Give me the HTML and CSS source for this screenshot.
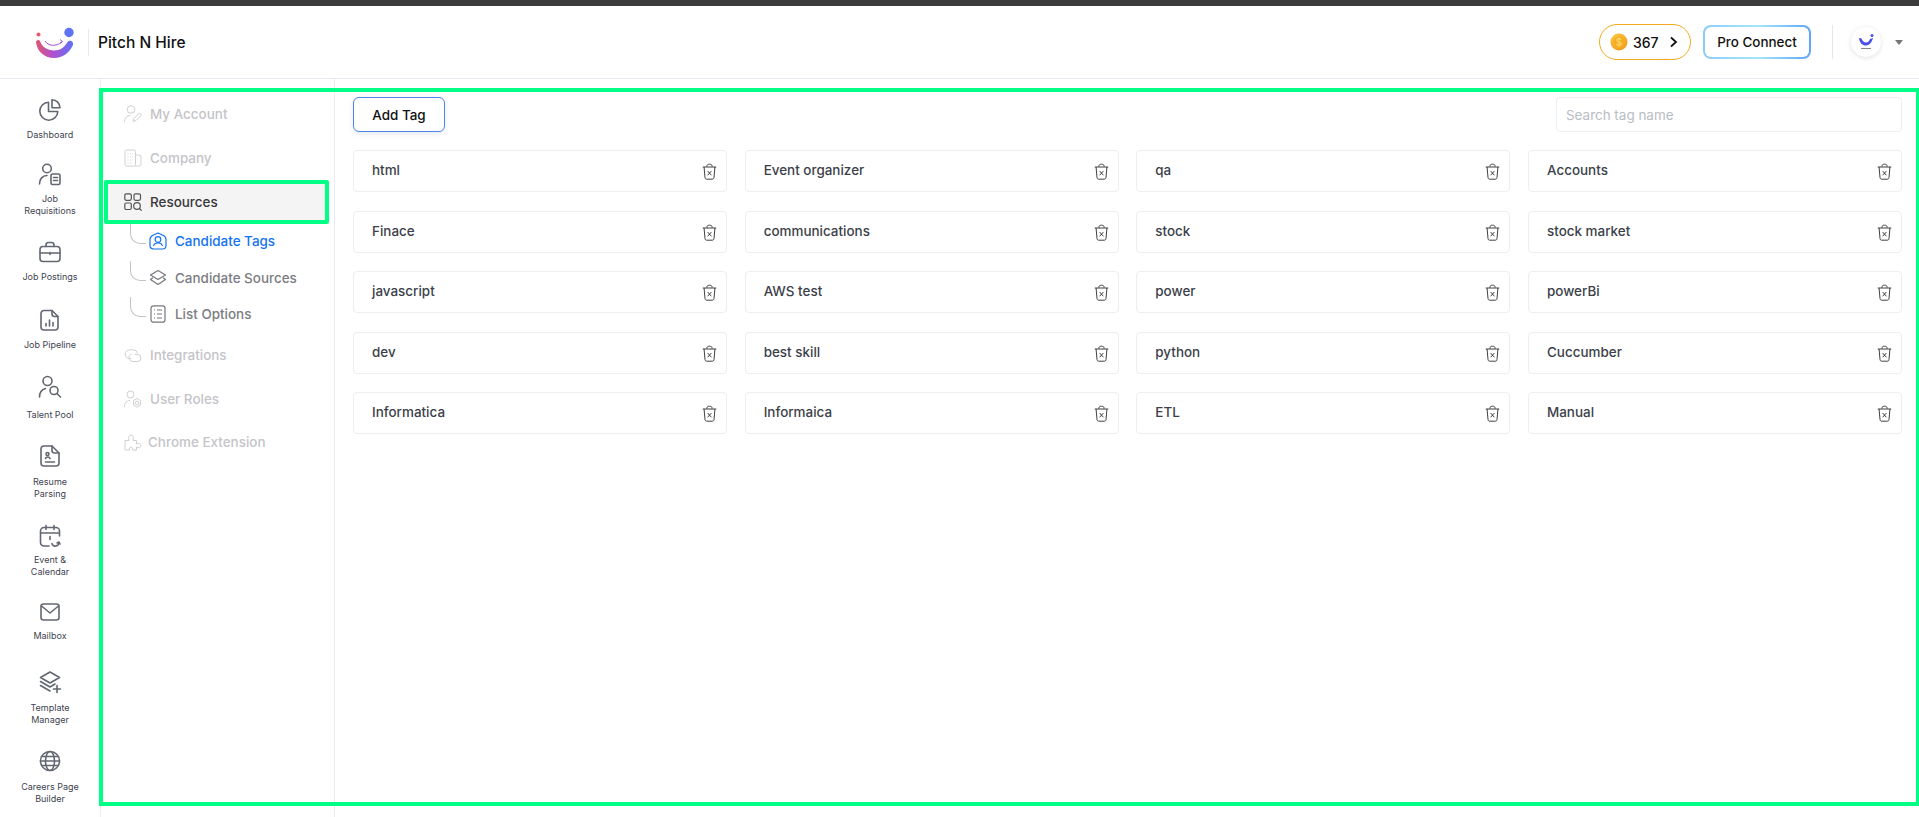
FILE: index.html
```html
<!DOCTYPE html>
<html lang="en">
<head>
<meta charset="utf-8">
<title>Pitch N Hire</title>
<link rel="stylesheet" href="styles.css">
</head>
<body>
<svg class="defs" width="0" height="0" aria-hidden="true">
  <defs>
    <linearGradient id="logoGrad" x1="0" y1="0" x2="1" y2="0">
      <stop offset="0" stop-color="#e0566f"/>
      <stop offset="0.45" stop-color="#b14fd0"/>
      <stop offset="1" stop-color="#5f73f5"/>
    </linearGradient>
    <radialGradient id="coinGrad" cx="0.4" cy="0.35" r="0.7">
      <stop offset="0" stop-color="#ffd34f"/>
      <stop offset="1" stop-color="#f19a12"/>
    </radialGradient>
    <symbol id="trash" viewBox="0 0 16 18">
      <path d="M.8 4.200h14.400M5.200 3.800C5.200 2 6 1.200 8 1.200s2.800.8 2.800 2.600M2.200 4.200l1 11.200c.1 1.200.8 1.800 1.900 1.800h5.800c1.100 0 1.800-.6 1.900-1.800l1-11.200M6 8.500l4 4.500M10 8.500l-4 4.500" fill="none" stroke="currentColor" stroke-width="1"/>
    </symbol>
  </defs>
</svg>
<div class="topstrip"></div>
<header class="header">
  <div class="brand">
    <svg class="logo" width="42" height="34" viewBox="0 -2 42 34">
      <circle cx="3.500" cy="7.500" r="2" fill="#e8596e"/>
      <circle cx="34" cy="5.500" r="4.700" fill="#5f73f5"/>
      <path d="M1 15c1 10 9 16 18 16s16-6 19-13c1-3-3-6-5.500-3-3 5-7 8.500-13.500 8.500S7 20 5 14c-1-2-4-1-4 1z" fill="url(#logoGrad)"/>
      <path d="M10 14c3 5 11 6 17 1" fill="none" stroke="#a44fd4" stroke-width="1"/>
      <path d="M25 12.500l2.500 2-2.500 1.500" fill="none" stroke="#a44fd4" stroke-width="1"/>
    </svg>
    <span class="brand-sep"></span>
    <span class="brand-name">Pitch N Hire</span>
  </div>
  <div class="header-actions">
    <button class="coins" type="button">
      <svg width="18" height="18" viewBox="0 0 18 18"><circle cx="9" cy="9" r="8.500" fill="url(#coinGrad)"/><circle cx="9" cy="9" r="5.800" fill="#f5ab22"/><text x="9" y="12.500" text-anchor="middle" class="coin-s">$</text></svg>
      <span>367</span>
      <svg class="chev" width="9" height="12" viewBox="0 0 9 12"><path d="M2 1.500L7 6l-5 4.500" fill="none" stroke="#111" stroke-width="1.800"/></svg>
    </button>
    <button class="pro" type="button">Pro Connect</button>
    <span class="head-sep"></span>
    <span class="avatar">
      <svg width="18" height="18" viewBox="0 0 18 18"><path d="M2 5c.5 5 3.500 7.500 7 7.500S15 9 16 5l-3 1c-1 2.500-2 3.500-4 3.500S5.500 8 4.500 5.500z" fill="#4a50e8"/><circle cx="15" cy="2.500" r="1.500" fill="#4a50e8"/><rect x="4" y="15" width="10" height="1" fill="#888"/></svg>
    </span>
    <span class="caret"></span>
  </div>
</header>
<div class="workspace">
  <nav class="rail">
    <a class="rail-item low">
      <svg width="24" height="24" viewBox="0 0 24 24" class="ri"><path d="M10.500 4.200a9 9 0 1 0 9.300 9.300H10.500z"/><path d="M14 1.800a8 8 0 0 1 8 8h-8z"/></svg>
      <span>Dashboard</span>
    </a>
    <a class="rail-item">
      <svg width="24" height="24" viewBox="0 0 24 24" class="ri"><circle cx="9" cy="5.500" r="4.300"/><path d="M1.500 21c0-5 3-8.500 7.500-8.500"/><rect x="13" y="11" width="9" height="10.500" rx="1.500"/><path d="M15.500 14.500h4M15.500 17.500h4"/></svg>
      <span>Job<br>Requisitions</span>
    </a>
    <a class="rail-item low">
      <svg width="24" height="24" viewBox="0 0 24 24" class="ri"><rect x="2" y="6.500" width="20" height="15" rx="3"/><path d="M8 6.500V5a2.500 2.500 0 0 1 2.500-2.500h3A2.500 2.500 0 0 1 16 5v1.500M2 13h20M12 12.500v2"/></svg>
      <span>Job Postings</span>
    </a>
    <a class="rail-item low">
      <svg width="24" height="24" viewBox="0 0 24 24" class="ri"><path d="M6 2.500h8l6 6V19a3 3 0 0 1-3 3H6a3 3 0 0 1-3-3V5.500a3 3 0 0 1 3-3z"/><path d="M14 2.500V6a2.500 2.500 0 0 0 2.500 2.500H20M8 18v-2.500M11.500 18v-6M15 18v-3.500"/></svg>
      <span>Job Pipeline</span>
    </a>
    <a class="rail-item lowest">
      <svg width="24" height="24" viewBox="0 0 24 24" class="ri"><circle cx="9.500" cy="6" r="4.500"/><path d="M1.500 22c0-4.500 2.500-7.500 6-8.500"/><circle cx="16" cy="15.500" r="4"/><path d="M19 18.500l3.500 3.500"/></svg>
      <span>Talent Pool</span>
    </a>
    <a class="rail-item lower">
      <svg width="24" height="24" viewBox="0 0 24 24" class="ri"><path d="M6 2h8l7 7v10a3 3 0 0 1-3 3H6a3 3 0 0 1-3-3V5a3 3 0 0 1 3-3z"/><path d="M14 2v4.500A2.500 2.500 0 0 0 16.500 9H21M7.500 14.500c.5-2 4-2 4.500 0M7.500 18h9"/><circle cx="9.500" cy="10" r="1.500"/></svg>
      <span>Resume<br>Parsing</span>
    </a>
    <a class="rail-item">
      <svg width="24" height="24" viewBox="0 0 24 24" class="ri"><path d="M11 22H6a3.500 3.500 0 0 1-3.500-3.500V7A3.500 3.500 0 0 1 6 3.500h12A3.500 3.500 0 0 1 21.500 7v5M2.500 9h19M8 1.500v4M16 1.500v4M12 12.500v3"/><path d="M14 19.500c0 1.500 2 3 4 2.500s3-2 3-3.500"/><path d="M19 19l2-1 1 2"/></svg>
      <span>Event &amp;<br>Calendar</span>
    </a>
    <a class="rail-item">
      <svg width="24" height="24" viewBox="0 0 24 24" class="ri"><rect x="3" y="4" width="18" height="16" rx="2.500"/><path d="M3.500 6l8.500 7 8.500-7"/></svg>
      <span>Mailbox</span>
    </a>
    <a class="rail-item lower">
      <svg width="24" height="24" viewBox="0 0 24 24" class="ri"><path d="M12 2l9.500 5.500L12 13 2.500 7.500z"/><path d="M2.500 11.500L12 17l5-3M2.500 15.500L12 21"/><path d="M19 15.500v7M15.500 19h7"/></svg>
      <span>Template<br>Manager</span>
    </a>
    <a class="rail-item lower">
      <svg width="24" height="24" viewBox="0 0 24 24" class="ri"><circle cx="12" cy="12" r="9.500"/><ellipse cx="12" cy="12" rx="4.500" ry="9.500"/><path d="M2.500 12h19M3.500 7.500h17M3.500 16.500h17"/></svg>
      <span>Careers Page<br>Builder</span>
    </a>
  </nav>
  <aside class="subnav">
    <a class="sub-item muted">
      <svg width="18" height="18" viewBox="0 0 18 18" class="si"><circle cx="7" cy="4.500" r="3.800"/><path d="M.5 17c0-4 2.500-6.500 6-6.500M9 16.500l1-3 5.500-5.500 2 2-5.500 5.500z"/></svg>
      <span>My Account</span>
    </a>
    <a class="sub-item muted">
      <svg width="18" height="18" viewBox="0 0 18 18" class="si"><rect x="1" y="1" width="10.500" height="16" rx="1.500"/><path d="M11.500 6H15a2 2 0 0 1 2 2v7a2 2 0 0 1-2 2h-3.500M3.500 5h1M6 5h1M8.500 5h.5M3.500 8h1M6 8h1M8.500 8h.5M3.500 11h1M6 11h1M8.500 11h.5M3.500 14h1M6 14h1M8.500 14h.5"/></svg>
      <span>Company</span>
    </a>
    <a class="sub-item current">
      <svg width="18" height="18" viewBox="0 0 18 18" class="si"><rect x=".8" y=".8" width="6.500" height="6.500" rx="1.500"/><rect x="10" y=".8" width="6.500" height="6.500" rx="1.500"/><rect x=".8" y="10" width="6.500" height="6.500" rx="1.500"/><circle cx="13" cy="13" r="3.300"/><path d="M15.500 15.500l2.200 2.200"/></svg>
      <span>Resources</span>
    </a>
    <a class="child active">
      <span class="elbow first"></span>
      <svg width="18" height="18" viewBox="0 0 18 18" class="si"><path d="M9 1l5 2.200c2 .9 3 2.300 3 4.300v6c0 2-1.500 3.500-3.500 3.500h-9C2.500 17 1 15.500 1 13.500v-6c0-2 1-3.400 3-4.300z"/><circle cx="9" cy="7.500" r="2.800"/><path d="M4.500 14c.5-2.500 2.500-3 4.500-3s4 .5 4.500 3"/></svg>
      <span>Candidate Tags</span>
    </a>
    <a class="child">
      <span class="elbow"></span>
      <svg width="18" height="18" viewBox="0 0 18 18" class="si"><path d="M9 1.500l7.500 4.500L9 10.500 1.500 6z"/><path d="M4 8.700L1.500 10.500 9 15.500l7.500-5L14 8.700"/></svg>
      <span>Candidate Sources</span>
    </a>
    <a class="child">
      <span class="elbow"></span>
      <svg width="18" height="18" viewBox="0 0 18 18" class="si"><rect x="2" y=".8" width="14" height="16.400" rx="2.500"/><path d="M5 5h1M8 5h5M5 9h1M8 9h5M5 13h1M8 13h5"/></svg>
      <span>List Options</span>
    </a>
    <a class="sub-item muted after-tree">
      <svg width="18" height="18" viewBox="0 0 18 18" class="si"><path d="M7 12.500H5.500a4.300 4.300 0 0 1 0-8.600h4a4 4 0 0 1 4 3.500"/><path d="M7.500 8.500c-2 0-2.500 1.500-2.500 3s1.500 4 4 4h4.500a3.500 3.500 0 0 0 0-7H11"/></svg>
      <span>Integrations</span>
    </a>
    <a class="sub-item muted">
      <svg width="18" height="18" viewBox="0 0 18 18" class="si"><circle cx="6.500" cy="4.500" r="3.500"/><path d="M.5 17c0-4 2-6.500 5.500-6.500"/><circle cx="13" cy="13" r="1.800"/><path d="M13 8.500l3.500 2v4.500L13 17.200l-3.500-2.200v-4.500z"/></svg>
      <span>User Roles</span>
    </a>
    <a class="sub-item muted ext">
      <svg width="18" height="18" viewBox="0 0 18 18" class="si"><path d="M1 17V7.500h4C4 5 5 2 7 2s3 3 2 5.500h3.500V11c2-1 4.500-.5 4.500 1.500S14.500 15 12.500 14v3H8.500c.5-2-.5-3-1.500-3s-2 1-1.500 3z"/></svg>
      <span>Chrome Extension</span>
    </a>
  </aside>
  <main class="main">
    <div class="toolbar">
      <button class="add-tag" type="button">Add Tag</button>
      <input class="search" type="text" placeholder="Search tag name">
    </div>
    <div class="tags">
      <div class="tag"><span>html</span><svg class="trash"><use href="#trash"/></svg></div>
      <div class="tag"><span>Event organizer</span><svg class="trash"><use href="#trash"/></svg></div>
      <div class="tag"><span>qa</span><svg class="trash"><use href="#trash"/></svg></div>
      <div class="tag"><span>Accounts</span><svg class="trash"><use href="#trash"/></svg></div>
      <div class="tag"><span>Finace</span><svg class="trash"><use href="#trash"/></svg></div>
      <div class="tag"><span>communications</span><svg class="trash"><use href="#trash"/></svg></div>
      <div class="tag"><span>stock</span><svg class="trash"><use href="#trash"/></svg></div>
      <div class="tag"><span>stock market</span><svg class="trash"><use href="#trash"/></svg></div>
      <div class="tag"><span>javascript</span><svg class="trash"><use href="#trash"/></svg></div>
      <div class="tag"><span>AWS test</span><svg class="trash"><use href="#trash"/></svg></div>
      <div class="tag"><span>power</span><svg class="trash"><use href="#trash"/></svg></div>
      <div class="tag"><span>powerBi</span><svg class="trash"><use href="#trash"/></svg></div>
      <div class="tag"><span>dev</span><svg class="trash"><use href="#trash"/></svg></div>
      <div class="tag"><span>best skill</span><svg class="trash"><use href="#trash"/></svg></div>
      <div class="tag"><span>python</span><svg class="trash"><use href="#trash"/></svg></div>
      <div class="tag"><span>Cuccumber</span><svg class="trash"><use href="#trash"/></svg></div>
      <div class="tag"><span>Informatica</span><svg class="trash"><use href="#trash"/></svg></div>
      <div class="tag"><span>Informaica</span><svg class="trash"><use href="#trash"/></svg></div>
      <div class="tag"><span>ETL</span><svg class="trash"><use href="#trash"/></svg></div>
      <div class="tag"><span>Manual</span><svg class="trash"><use href="#trash"/></svg></div>
    </div>
  </main>
  <div class="panel-outline"></div>
</div>
</body>
</html>
```
FILE: styles.css
```css
* { box-sizing: border-box; }
html, body { height: 100%; }
body {
  margin: 0;
  display: flex;
  flex-direction: column;
  height: 817px;
  overflow: hidden;
  background: #fff;
  color: #222;
  font-family: Inter, "Liberation Sans", sans-serif;
}
.defs { position: absolute; }
.topstrip { height: 6px; flex: none; background: #3c3c3c; }

.header {
  flex: none;
  height: 73px;
  display: flex;
  align-items: center;
  justify-content: space-between;
  padding: 0 16px 0 35px;
  border-bottom: 1px solid #e9e9ef;
}
.brand { display: flex; align-items: center; }
.logo { display: block; }
.brand-sep { width: 1px; height: 27px; margin: 0 9px 0 11px; background: #e9e9ef; }
.brand-name { font-size: 15.500px; font-weight: 500; color: #111; }
.header-actions { display: flex; align-items: center; }
.coins {
  display: flex;
  align-items: center;
  width: 92px;
  height: 36px;
  padding: 0 0 0 10px;
  border: 1px solid #f4a81f;
  border-radius: 18px;
  background: #fff;
  font: 500 14px Inter, sans-serif;
  color: #111;
}
.coins span { margin-left: 5px; }
.chev { margin-left: 10px; }
.coin-s { font: 600 10px Inter, sans-serif; fill: #fbd466; }
.pro {
  width: 108px;
  height: 34px;
  margin-left: 12px;
  padding: 0;
  border: 2px solid transparent;
  border-radius: 8px;
  background: linear-gradient(#fff, #fff) padding-box, linear-gradient(90deg, #8ccbfa, #a5e6fc 50%, #5fa5f9) border-box;
  font: 500 13.440px Inter, sans-serif;
  color: #111;
}
.head-sep { width: 1px; height: 34px; margin: 0 18px 0 21px; background: #e6e6ec; }
.avatar {
  width: 30px;
  height: 30px;
  display: flex;
  align-items: center;
  justify-content: center;
  border-radius: 50%;
  background: #fff;
  box-shadow: 0 1px 5px rgba(0, 0, 0, .12);
}
.caret {
  width: 0;
  height: 0;
  margin-left: 14px;
  border: 4px solid transparent;
  border-top: 5px solid #777;
  border-bottom: 0;
}

.workspace { position: relative; flex: 1; display: flex; min-height: 0; }
.rail {
  flex: none;
  width: 101px;
  padding-top: 19px;
  border-right: 1px solid #ececf2;
  display: grid;
  grid-template-rows: 65px 77px 68px 67px 69px 80px 76px 70px 79px 60px;
}
.rail-item {
  display: flex;
  flex-direction: column;
  align-items: center;
  color: #3e4350;
  font-size: 9px;
  line-height: 11.500px;
  text-align: center;
}
.rail-item span { margin-top: 6px; }
.rail-item.low span { margin-top: 7px; }
.rail-item.lower span { margin-top: 8px; }
.rail-item.lowest span { margin-top: 9.500px; }
.ri { fill: none; stroke: #636771; stroke-width: 1.600; stroke-linejoin: round; stroke-linecap: round; }

.subnav {
  flex: none;
  width: 234px;
  padding-top: 13px;
  border-right: 1px solid #ececf2;
}
.sub-item {
  display: flex;
  align-items: center;
  height: 44px;
  padding-left: 23px;
  font-size: 13.440px;
  font-weight: 500;
  gap: 8px;
}
.sub-item.muted { color: #c4c4c9; }
.sub-item.after-tree { margin-top: 1px; }
.sub-item.ext { gap: 6px; margin-top: -1px; }
.sub-item.muted .si { stroke: #d0d0d4; stroke-width: 1; }
.si { fill: none; stroke: #555; stroke-width: 1.200; stroke-linejoin: round; flex: none; }
.sub-item.current {
  margin: 0 5px -1px 3px;
  padding: 0 0 0 16px;
  background: #f4f4f4;
  border: 4px solid #00ff85;
  border-radius: 2px;
  color: #37373b;
}
.child {
  position: relative;
  display: flex;
  align-items: center;
  height: 36.400px;
  padding-left: 48px;
  gap: 8px;
  font-size: 13.440px;
  font-weight: 500;
  color: #7c7c82;
}
.child .si { stroke: #77777d; }
.child.active { color: #1473f0; }
.child.active .si { stroke: #1473f0; }
.elbow {
  position: absolute;
  left: 29px;
  bottom: 15px;
  width: 16px;
  height: 20px;
  border-left: 1px solid #c4c4c8;
  border-bottom: 1px solid #c4c4c8;
  border-bottom-left-radius: 10px;
}

.main { flex: 1; min-width: 0; padding: 18px 17px 0 18px; }
.toolbar { display: flex; align-items: flex-start; justify-content: space-between; }
.add-tag {
  width: 92px;
  height: 35px;
  padding: 0;
  border: 1px solid #4d86ea;
  border-radius: 6px;
  background: #fff;
  box-shadow: 0 2px 5px rgba(40, 70, 130, .12);
  font: 500 13.440px Inter, sans-serif;
  color: #111;
}
.search {
  width: 346px;
  height: 35px;
  padding: 0 9px;
  border: 1px solid #eeeef2;
  border-radius: 4px;
  font: 400 13.440px Inter, sans-serif;
  color: #333;
}
.search::placeholder { color: #b8bcc4; opacity: 1; }
.tags {
  display: grid;
  grid-template-columns: repeat(4, 374px);
  justify-content: space-between;
  grid-auto-rows: 42px;
  row-gap: 18.500px;
  margin-top: 18px;
}
.tag {
  display: flex;
  align-items: center;
  justify-content: space-between;
  padding: 0 9px 1.500px 18px;
  border: 1px solid #eeeef2;
  border-radius: 4px;
  font-size: 13.440px;
  font-weight: 500;
  color: #3c3f4a;
}
.trash { width: 15px; height: 17px; color: #333; margin-top: 3px; }

.panel-outline {
  position: absolute;
  left: 99px;
  top: 9px;
  right: 0;
  bottom: 11px;
  border: 4px solid #00ff85;
  border-right-width: 3px;
  pointer-events: none;
}
```
